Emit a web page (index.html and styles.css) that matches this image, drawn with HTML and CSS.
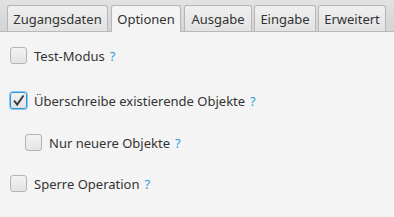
FILE: index.html
```
<!DOCTYPE html>
<html>
<head>
<meta charset="utf-8">
<link rel="stylesheet" href="styles.css">
</head>
<body>
<div class="tabpane">
  <div class="tabs">
    <div class="tab t1">Zugangsdaten</div>
    <div class="tab t2 selected">Optionen</div>
    <div class="tab t3">Ausgabe</div>
    <div class="tab t4">Eingabe</div>
    <div class="tab t5">Erweitert</div>
  </div>
  <div class="content">
    <div class="row r1"><span class="box"></span><span class="label">Test-Modus</span><span class="help">?</span></div>
    <div class="row r2"><span class="box checked focused"><svg width="17" height="17" viewBox="0 0 17 17"><path d="M4 8.5 L7.2 12.5 L13.5 3.5" fill="none" stroke="#3d3d3d" stroke-width="2"/></svg></span><span class="label">Überschreibe existierende Objekte</span><span class="help">?</span></div>
    <div class="row r3 indent"><span class="box"></span><span class="label">Nur neuere Objekte</span><span class="help">?</span></div>
    <div class="row r4"><span class="box"></span><span class="label">Sperre Operation</span><span class="help">?</span></div>
  </div>
</div>
</body>
</html>
```
FILE: styles.css
```
html, body {
  margin: 0;
  padding: 0;
  background: #f4f4f4;
}
body {
  font-family: "Noto Sans", "Open Sans", sans-serif;
  font-size: 13px;
  color: #333333;
  width: 394px;
  height: 217px;
  overflow: hidden;
}
.tabs {
  display: flex;
  align-items: flex-end;
  height: 32px;
  padding-left: 7px;
  box-sizing: border-box;
  background: linear-gradient(#e2e2e2, #d4d4d4);
  border-bottom: 1px solid #b9b9b9;
  gap: 2px;
}
.tab {
  height: 26px;
  box-sizing: border-box;
  border: 1px solid #b6b6b6;
  border-bottom: none;
  border-radius: 3px 3px 0 0;
  background: linear-gradient(#f0f0f0, #e2e2e2);
  display: flex;
  align-items: center;
  justify-content: center;
  padding: 0 6px;
  margin-bottom: 0;
}
.t1 { width: 101px; }
.t2 { width: 70px; margin-left: 1px; }
.t3 { width: 68px; margin-left: 1px; }
.t4 { width: 62px; }
.t5 { width: 68px; }
.tab.selected {
  background: #f4f4f4;
  height: 27px;
  margin-bottom: -1px;
}
.content {
  display: flex;
  flex-direction: column;
  padding-left: 10px;
  padding-top: 14px;
}
.row {
  display: flex;
  align-items: center;
  height: 19px;
}
.r2 { margin-top: 26px; }
.r3 { margin-top: 23px; }
.r4 { margin-top: 22px; }
.indent { padding-left: 15px; }
.box {
  width: 17px;
  height: 17px;
  box-sizing: border-box;
  border: 1px solid #b3b3b3;
  border-radius: 3px;
  background: linear-gradient(#f2f2f2, #e4e4e4);
  margin-right: 7px;
  position: relative;
  display: block;
}
.box svg {
  position: absolute;
  left: -1px;
  top: -1px;
}
.box.focused {
  border: 1px solid #2b97d8;
  box-shadow: 0 0 0 1px #8cc8ec;
}
.label {
  color: #333333;
}
.help {
  color: #2a9fd6;
  margin-left: 5px;
}
```
